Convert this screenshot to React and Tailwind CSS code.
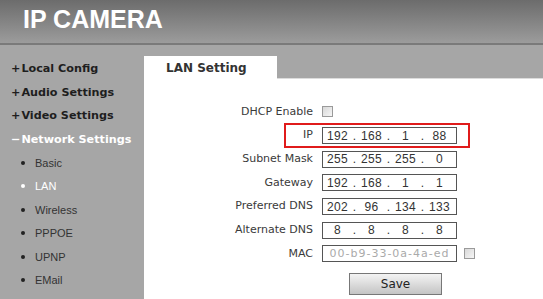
import React from "react";

const mainItems = [
  { sign: "+", label: "Local Config", active: false },
  { sign: "+", label: "Audio Settings", active: false },
  { sign: "+", label: "Video Settings", active: false },
  { sign: "\u2212", label: "Network Settings", active: true },
];
const subItems = [
  { label: "Basic", active: false },
  { label: "LAN", active: true },
  { label: "Wireless", active: false },
  { label: "PPPOE", active: false },
  { label: "UPNP", active: false },
  { label: "EMail", active: false },
];

function IpBox({ parts }) {
  return (
    <div className="flex items-center w-[135px] h-[17px] border border-[#555] bg-white pl-[1px] text-[12px] text-[#333] leading-none" style={{ fontFamily: '"Liberation Sans", Arial, sans-serif' }}>
      {parts.map((p, i) => (
        <React.Fragment key={i}>
          <span className="w-[27px] text-center tracking-[0.3px]">{p}</span>
          {i < 3 && <span className="w-[7px] text-center">.</span>}
        </React.Fragment>
      ))}
    </div>
  );
}

function Check() {
  return <div className="w-[11px] h-[11px] border border-[#9a9a9a] bg-gradient-to-br from-[#d8d8d8] to-[#f6f6f6]" />;
}

function Row({ label, children }) {
  return (
    <div className="flex items-center h-[23.7px]">
      <div className="w-[169px] text-right text-[11px] text-[#3a3a3a]" style={{ fontFamily: '"DejaVu Sans", Verdana, sans-serif' }}>{label}</div>
      <div className="ml-[9px] flex items-center">{children}</div>
    </div>
  );
}

export default function App() {
  return (
    <div className="w-[543px] h-[299px] overflow-hidden bg-[#a6a6a6] flex flex-col">
      <div className="h-[45px] shrink-0 bg-gradient-to-b from-[#6c6c6c] to-[#9c9c9c] border-b-2 border-[#7a7a7a] pl-[23px] pt-[2px]">
        <div className="text-white font-bold text-[25px] leading-[34px]" style={{ fontFamily: '"Liberation Sans", Arial, sans-serif' }}>IP CAMERA</div>
      </div>
      <div className="flex flex-1 min-h-0">
        <div className="w-[144px] shrink-0 pt-[13px]">
          {mainItems.map((it) => (
            <div key={it.label} className={`h-[23.5px] flex items-center pl-[11px] font-bold text-[11.2px] ${it.active ? "text-white" : "text-[#1e1e1e]"}`} style={{ fontFamily: '"DejaVu Sans", Verdana, sans-serif' }}>
              <span className="mr-[1px]">{it.sign}</span>
              <span>{it.label}</span>
            </div>
          ))}
          <div className="-mt-[1px]">
            {subItems.map((it) => (
              <div key={it.label} className={`h-[23.5px] flex items-center pl-[21px] text-[11px] ${it.active ? "text-white" : "text-[#333]"}`} style={{ fontFamily: '"Liberation Sans", Arial, sans-serif' }}>
                <span className={`w-[4px] h-[4px] rounded-full mr-[10px] ${it.active ? "bg-white" : "bg-[#222]"}`} />
                <span>{it.label}</span>
              </div>
            ))}
          </div>
        </div>
        <div className="flex-1 flex flex-col pt-[11px]">
          <div className="flex h-[23px] shrink-0">
            <div className="w-[133px] bg-white flex items-center pl-[22px] font-bold text-[12px] text-[#333]" style={{ fontFamily: '"DejaVu Sans", Verdana, sans-serif' }}>LAN Setting</div>
            <div className="flex-1 border-b border-[#dcdcdc]" />
          </div>
          <div className="flex-1 bg-white pt-[21px]">
            <Row label="DHCP Enable"><Check /></Row>
            <div className="relative">
              <div className="absolute left-[140px] top-[-1px] w-[186px] h-[25px] border-2 border-[#e01b1b]" />
              <Row label="IP"><IpBox parts={["192", "168", "1", "88"]} /></Row>
            </div>
            <Row label="Subnet Mask"><IpBox parts={["255", "255", "255", "0"]} /></Row>
            <Row label="Gateway"><IpBox parts={["192", "168", "1", "1"]} /></Row>
            <Row label="Preferred DNS"><IpBox parts={["202", "96", "134", "133"]} /></Row>
            <Row label="Alternate DNS"><IpBox parts={["8", "8", "8", "8"]} /></Row>
            <Row label="MAC">
              <div className="w-[135px] h-[17px] border border-[#555] bg-white flex items-center justify-center text-[11px] tracking-[1px] text-[#aaa] leading-none" style={{ fontFamily: '"DejaVu Sans", Verdana, sans-serif' }}>00-b9-33-0a-4a-ed</div>
              <div className="ml-[7px]"><Check /></div>
            </Row>
            <div className="ml-[205px] mt-[7px] w-[93px] h-[22px] border border-[#777] bg-gradient-to-b from-[#f4f4f4] to-[#c4c4c4] flex items-center justify-center text-[12px] text-[#222]" style={{ fontFamily: '"DejaVu Sans", Verdana, sans-serif' }}>Save</div>
          </div>
        </div>
      </div>
    </div>
  );
}
